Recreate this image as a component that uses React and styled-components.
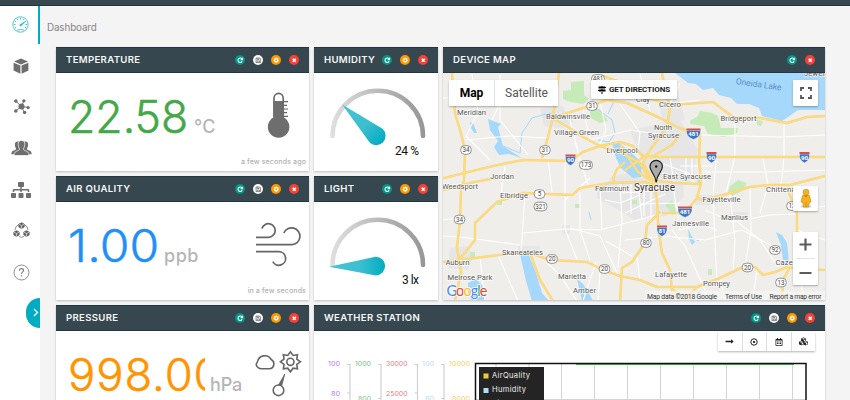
import React from "react";
import styled, { createGlobalStyle } from "styled-components";
import { FaSitemap, FaCubes, FaRegCalendarAlt, FaMapSigns, FaLongArrowAltRight } from "react-icons/fa";

const GlobalStyle = createGlobalStyle`
  * { box-sizing: border-box; }
  html, body { margin: 0; overflow: hidden; }
  body { background: #f4f4f4; font-family: Inter, "Open Sans", sans-serif; }
  svg { display: block; }
`;

const Page = styled.div`
  width: 850px;
  height: 400px;
  display: flex;
  flex-direction: column;
  overflow: hidden;
`;
const TopBar = styled.div`
  flex: 0 0 6px;
  background: #37474f;
  border-bottom: 1px solid #22343d;
`;
const Main = styled.div`
  flex: 1;
  display: flex;
  min-height: 0;
`;
const Sidebar = styled.nav`
  width: 40px;
  flex: none;
  background: #fff;
  display: flex;
  flex-direction: column;
`;
const NavItem = styled.a`
  height: ${(p) => (p.$active ? 38 : 41.3)}px;
  flex: none;
  display: flex;
  align-items: center;
  justify-content: center;
  padding: ${(p) => (p.$active ? "0 0 2px 2px" : "2px 0 0 2px")};
  color: ${(p) => (p.$active ? "#26b8ca" : "#6e6e6e")};
  border-right: ${(p) => (p.$active ? "2px solid #00acc1" : "0")};
`;
const Toggle = styled.button`
  width: 14px;
  height: 30px;
  flex: none;
  align-self: flex-end;
  margin-top: 6px;
  padding: 0 0 0 5px;
  border: 0;
  border-radius: 15px 0 0 15px;
  background: #00acc1;
  display: flex;
  align-items: center;
  justify-content: center;
`;
const Content = styled.main`
  flex: 1;
  padding: 0 25px 0 16px;
`;
const Crumb = styled.div`
  height: 41px;
  margin-left: -9px;
  padding-top: 15px;
  font-size: 9.8px;
  line-height: 14px;
  letter-spacing: -0.1px;
  color: #858585;
`;
const Grid = styled.div`
  display: grid;
  grid-template-columns: 253px 124px 382px;
  grid-template-rows: 124px 124px 124px;
  gap: 5px;
`;
const CardBox = styled.section`
  grid-area: ${(p) => p.$area};
  background: #fff;
  box-shadow: 0 1px 2px rgba(0, 0, 0, 0.22);
  display: flex;
  flex-direction: column;
  overflow: hidden;
`;
const CardHeader = styled.header`
  height: 26px;
  flex: none;
  display: flex;
  align-items: center;
  justify-content: space-between;
  padding: 0 10px;
  background: #37474f;
  border: solid #233740;
  border-width: 1px 0;
`;
const Title = styled.h2`
  margin: 0;
  font-size: 9.6px;
  font-weight: 600;
  line-height: 14px;
  letter-spacing: 0.32px;
  color: #f5f6f7;
  white-space: nowrap;
`;
const Actions = styled.div`
  display: flex;
  gap: 7.5px;
`;
const tones = { teal: "#009688", white: "#fafafa", orange: "#ff9800", red: "#f44336" };
const Action = styled.button`
  width: 10.5px;
  height: 10.5px;
  padding: 0;
  border: 0;
  border-radius: 50%;
  background: ${(p) => tones[p.$tone]};
`;
const ReadoutBody = styled.div`
  flex: 1;
  display: flex;
  flex-direction: column;
  padding: 13px 3px 3px 14px;
`;
const ReadoutRow = styled.div`
  height: 67px;
  flex: none;
  display: flex;
  justify-content: space-between;
`;
const Reading = styled.div`
  display: flex;
  align-items: baseline;
  line-height: 62px;
  white-space: nowrap;
`;
const ValueBox = styled.div`
  width: ${(p) => p.$w}px;
  overflow: hidden;
  height: 62px;
`;
const Value = styled.div`
  margin-left: ${(p) => p.$shift ?? -2}px;
  font-size: 44.5px;
  font-weight: 300;
  letter-spacing: ${(p) => p.$track}px;
  -webkit-text-stroke: 0.5px ${(p) => p.$color};
  transform: scaleX(${(p) => p.$stretch ?? 1});
  transform-origin: 0 50%;
  color: ${(p) => p.$color};
`;
const Unit = styled.span`
  font-size: 18px;
  font-weight: 500;
  letter-spacing: ${(p) => p.$track ?? 0}px;
  margin-left: 5px;
  color: #b5b5b5;
`;
const Stamp = styled.div`
  align-self: flex-end;
  font-size: 7px;
  font-weight: 500;
  line-height: 10px;
  letter-spacing: 0.13px;
  margin-top: 4px;
  color: #b0b0b0;
`;
const StationBody = styled.div`
  flex: 1;
  display: flex;
  flex-direction: column;
`;
const ToolGroup = styled.div`
  height: 19px;
  flex: none;
  align-self: flex-end;
  margin: 1px 10px 0 0;
  display: flex;
  gap: 1px;
  background: #ddd;
  box-shadow: 0 1px 2px rgba(0, 0, 0, 0.3);
`;
const Tool = styled.button`
  width: 23.5px;
  padding: 0;
  border: 0;
  background: #fff;
  display: flex;
  align-items: center;
  justify-content: center;
  color: #222;
`;
const MapBody = styled.div`
  flex: 1;
  display: grid;
  position: relative;
`;
const Overlay = styled.div`
  position: absolute;
  top: ${(p) => p.$top}px;
  left: ${(p) => p.$left}px;
  width: ${(p) => p.$w}px;
  height: ${(p) => p.$h}px;
  display: flex;
  flex-direction: ${(p) => (p.$column ? "column" : "row")};
  align-items: center;
  justify-content: center;
  background: #fff;
  border-radius: 1px;
  box-shadow: 0 1px 2px rgba(0, 0, 0, 0.3);
`;
const MapType = styled.button`
  height: 26px;
  width: ${(p) => p.$w}px;
  padding: 0;
  border: 0;
  border-left: ${(p) => (p.$on ? "0" : "1px solid #e2e2e2")};
  background: none;
  font: ${(p) => (p.$on ? 700 : 400)} 12px Roboto, sans-serif;
  color: ${(p) => (p.$on ? "#000" : "#565656")};
`;
const Directions = styled.span`
  margin-left: 3px;
  font: 700 8px Roboto, sans-serif;
  letter-spacing: -0.1px;
  white-space: nowrap;
  color: #1c1c1c;
`;

const glyphs = {
  teal: <g fill="none" stroke="#fff" strokeWidth="1"><path d="M6.7 3.8A2.1 2.1 0 1 0 6.8 6" /><path d="M7.2 2.6v1.8H5.4" /></g>,
  white: <g fill="none" stroke="#666" strokeWidth=".7"><path d="M2.900 2.900h3.400l.9.9V7.200H2.900z" /><path d="M4 3v1.300h1.700V3M4 7V5.700h2.200V7" /></g>,
  orange: <g><circle cx="5" cy="5" r="1.5" fill="none" stroke="#fff" strokeWidth="1.2" /><path d="M5 2.4v.8M5 6.8v.8M2.4 5h.8M6.8 5h.8M3.2 3.2l.6.6M6.2 6.2l.6.6M6.8 3.2l-.6.6M3.8 6.2l-.6.6" stroke="#fff" strokeWidth=".8" /></g>,
  red: <path d="M3.600 3.600l2.800 2.800M6.400 3.600l-2.800 2.800" stroke="#fff" strokeWidth="1.500" />,
};
const ALL = ["teal", "white", "orange", "red"];

function Card({ area, title, actions = ALL, children }) {
  return (
    <CardBox $area={area}>
      <CardHeader>
        <Title>{title}</Title>
        <Actions>
          {actions.map((t) => (
            <Action key={t} $tone={t}><svg width="10.500" height="10.500" viewBox="0 0 10 10">{glyphs[t]}</svg></Action>
          ))}
        </Actions>
      </CardHeader>
      {children}
    </CardBox>
  );
}

function Readout({ value, unit, color, width, track, stretch, shift, unitTrack, stamp, icon }) {
  return (
    <ReadoutBody>
      <ReadoutRow>
        <Reading>
          <ValueBox $w={width}><Value $color={color} $track={track} $stretch={stretch} $shift={shift}>{value}</Value></ValueBox>
          <Unit $track={unitTrack}>{unit}</Unit>
        </Reading>
        {icon}
      </ReadoutRow>
      {stamp && <Stamp>{stamp}</Stamp>}
    </ReadoutBody>
  );
}

const Thermometer = () => (
  <svg width="60" height="60" viewBox="246 86 60 60">
    <path d="M274 117V98a4.6 4.6 0 0 1 9.2 0v19" fill="#fff" stroke="#666" strokeWidth="1.6" />
    <path d="M273.3 101h10.6v16.5a10.8 10.8 0 1 1-10.6 0z" fill="#6e6e6e" />
    <path d="M283 101.7h5M283 105.3h4M283 109h5M283 112.7h4M283 116.4h5" stroke="#666" strokeWidth="1.2" />
  </svg>
);
const Wind = () => (
  <svg width="60" height="60" viewBox="246 215 60 60" fill="none" stroke="#666" strokeWidth="1.7">
    <path d="M256 237.3h12.5a6.8 6.8 0 1 0-6.6-8.8M256 244.7h36a8.4 8.4 0 1 0-8.2-11.7M256 251.7h22.500a6.800 6.800 0 1 1-5.700 10" />
  </svg>
);
const sunPoints = Array.from({ length: 16 }, (_, i) => {
  const a = (i * Math.PI) / 8;
  const r = i % 2 ? 6.9 : 10;
  return `${290.4 + r * Math.sin(a)},${361.8 - r * Math.cos(a)}`;
}).join(" ");
const Weather = () => (
  <svg width="60" height="60" viewBox="246 344 60 60" fill="none" stroke="#666" strokeWidth="1.6">
    <path d="M262 368.800h8a5 5 0 0 0 1.200-9.300a7.400 7.400 0 0 0-13.700 2.200a4 4 0 0 0 .2 5.500q1.500 1.600 4.300 1.600z" />
    <polygon points={sunPoints} />
    <circle cx="290.4" cy="361.8" r="3.6" />
    <circle cx="278.5" cy="390.3" r="5.3" />
    <path d="M278.5 385l6.300-11-3 11.500z" fill="#666" strokeWidth=".8" />
  </svg>
);

function Gauge({ id, angle, len, label, labelWidth }) {
  return (
    <svg width="124" height="98" viewBox="314 73 124 98">
      <defs>
        <linearGradient id={`${id}-arc`}><stop offset="0" stopColor="#dedede" /><stop offset="1" stopColor="#979797" /></linearGradient>
        <linearGradient id={`${id}-hand`}><stop offset="0" stopColor="#46c3d2" /><stop offset=".55" stopColor="#3dbfcf" /><stop offset="1" stopColor="#00acc1" /></linearGradient>
      </defs>
      <path d="M332.500 136a45 45 0 0 1 90.500 0" fill="none" stroke={`url(#${id}-arc)`} strokeWidth="4.600" strokeLinecap="round" />
      <path d={`M${377.5 - len} 137L375.7 127.600A9.400 9.400 0 1 1 375.700 146.400z`} fill={`url(#${id}-hand)`} transform={`rotate(${angle} 377.5 137)`} />
      <text x="419" y="154.800" textAnchor="end" textLength={labelWidth} fontFamily="Roboto, sans-serif" fontSize="12" fill="#111">{label}</text>
    </svg>
  );
}

const highways = [
  "M452 73L453 90 455 113 462 137 465 152 464 180 461 190 460 220 457 247 459 260 461 272 455 301",
  "M440 179L493 166 523 160 570 161 583 152 600 146 620 142 633 146 643 156 655 157H825",
  "M440 191L470 183 495 178",
  "M559 73L553 117 548 137 542 158",
  "M552 118L568 127 583 137 600 146 622 153 640 163 650 180",
  "M552 118L583 108 607 100 627 103 647 112 660 118 677 127 690 132 700 134 699 160 701 183 697 198 685 213 662 213",
  "M662 73L665 90 670 107 667 127 650 150 643 163 653 180 657 200 658 222 660 240 662 253 670 270 673 301",
  "M600 75L620 82 630 92 670 105 713 102 733 117 760 118 787 123 807 117 825 116",
  "M620 145L638 172 650 180 675 183 701 184",
  "M697 197L702 200 723 195 750 187 770 185 790 185 825 176",
  "M787 188L797 213 797 232",
  "M443 262L507 254 530 253 550 260 587 262 603 270 620 276 640 280 657 287 697 287 720 278 743 267 755 267 763 275 775 272 787 267 800 269 825 270",
  "M660 212L647 225 645 243 632 262 622 268 620 301",
  "M530 253L540 280 553 301",
  "M459 260L475 240 475 223 497 202 523 193 572 195 580 188 610 183 645 182 657 186",
  "M615 184L613 178 617 169 625 162",
  "M790 267L783 280 782 301",
  "M673 290L690 301M697 287L684 301",
  "M650 158L672 145 680 134M648 154L625 170",
];
const streets = [
  "M443 98L480 99 520 92 557 88", "M472 74L478 112 466 136 490 160", "M500 75V120L528 155", "M466 140L508 136 548 138",
  "M443 236L461 237 520 245", "M525 193L521 253M523 233L565 229 600 230 660 214", "M548 158L552 192",
  "M565 162V229L578 262M565 200L590 178M600 184L602 230M580 192V230L590 260", "M570 228L600 236 618 275", "M620 184L622 220 618 268",
  "M596 262L583 301M546 262L560 275 577 301", "M570 120L580 160 588 185", "M600 101L606 130 599 146", "M620 104L640 133 638 150", "M583 108L590 140 630 130 670 136",
  "M640 74L650 110M680 83L670 104 700 100", "M700 135L740 136 780 137 825 135", "M784 122V157L781 186", "M735 120V157L726 193",
  "M700 172H760L825 170", "M716 158L713 197 717 285", "M730 195L735 240 733 272", "M750 188L751 230 745 267", "M705 210L733 222 770 215 797 214",
  "M672 230L685 246 705 290M662 236L705 240 742 230 780 250", "M735 220L760 240 778 267", "M673 186L680 230 700 224 717 230", "M763 159L768 185 760 213",
  "M640 195L620 203 605 200M640 204L680 203M644 186V216M651 186V222M631 184V214M638 184L642 220M625 213L665 194M622 193L670 190",
  "M680 166H712M686 157V184M692 158V182M670 157L674 184M664 164L690 174", "M625 240L658 237M606 241L632 256M637 257L640 281", "M480 258L485 300M498 255L518 301M443 220L461 218",
  "M757 268L753 301M720 278L725 301M800 270L803 301", "M797 230L825 240M800 210L825 206", "M600 272L598 301M505 166L500 200", "M520 100L500 103 492 120",
];
const parks = [
  "M571 82l13-1v14l5 4-6 5-12-2-8-3v-8l8-1z", "M590 106l12 5 6 10-8 2-10-5z", "M690 121l8-5 2-5 12 2 6 3 3 12 17 0-1 5-13 4-16-3-4-8-14-2z",
  "M730 186l8-6 9 3-5 8-10 5-4-5z", "M672 200l4 10-3 5-8-10z", "M575 204h5v4h-5z", "M632 200h5v4h-5z", "M470 252h5v5h-5z", "M497 201h5v4h-5z", "M708 269h4v6h-4z", "M757 120l6 1-2 5-4-1z", "M638 86l8 2-2 6z", "M696 178l4-2 2 8h-4z",
];
const urban = ["M450 248l18-2 5 10-5 14-20-2z", "M540 108l22-2 12 16-12 6-18-2z", "M612 176l40-6 30 6 2 20-18 20-32 4-22-14-15-8z", "M630 130l50-10 18 30-6 32-34 0-18-26z", "M518 246h22v10h-22z", "M562 225h8v9h-8z", "M655 90l22 0 8 30-20 8z", "M730 212h18v8h-18z", "M695 195h22v10h-22z", "M597 186h20v12h-20z"];
const lakes = [
  "M675 73l13 10 8 1 7 6 10-2 6 7 12 3 6 6 12 0 10 4 3 8 20 5 6-4 10-7 27 0V73z",
  "M612 143l6-1 17 14 7 8-1 13-8 1-12-10-5-10z", "M488 119l13 5-3 3 5 19 19 12-13-4-10 1-5-8 4-6-8-11z",
  "M520 254l8-1 8 20 6 20 7 8h-17l-6-20z", "M468 283l8-4 9 9-1 13h-12l-4-8z", "M577 279l5 4 5 6 6 12h-11z",
  "M776 232l6 3 5 8 2 19-6-2-2-15z", "M688 229l4 8 3 5-3 3-3-6z", "M470 122l3 1 4 10-3 0-3-5z", "M697 291h4v3h-4z",
];
const rivers = ["M503 146L520 153 522 133 532 118 550 113 566 120", "M590 103L612 120 615 133 609 142 598 140", "M599 74L604 90 614 101 608 114", "M589 212l2 8M630 170l-4-15M692 238l7 3"];
const labels = [
  ["Meridian", 457, 114.5, 29], ["Baldwinsville", 546, 119, 44], ["Village Green", 554, 135, 45], ["Liverpool", 606.5, 152.5, 31],
  ["Jordan", 490, 178.5, 24], ["Weedsport", 442, 189, 36], ["Elbridge", 500, 198.3, 28], ["Fairmount", 595, 190.5, 34],
  ["Clay", 636, 102, 14], ["Cicero", 659, 107, 22], ["North", 654, 130, 18], ["Syracuse", 648, 137.8, 31], ["Bridgeport", 720.5, 121, 36],
  ["Jewell", 804, 76, 22], ["East Syracuse", 663, 179, 48], ["Fayetteville", 702.5, 201.5, 38], ["Manlius", 721, 219.5, 27], ["Jamesville", 672, 226, 37],
  ["Chittenango", 766, 191.5, 43], ["Lafayette", 655, 277, 32], ["Pompey", 703, 285.5, 27], ["Cazenovia", 775.5, 265, 36],
  ["Skaneateles", 502, 254.5, 41], ["Auburn", 445.5, 265, 24], ["Melrose Park", 447.5, 279.5, 45], ["Marietta", 558, 279, 28], ["Amber", 573, 293, 23],
];
const routes = [["34", 466, 150], ["31", 545, 150], ["31", 592, 106], ["481", 598, 79], ["173", 586, 165], ["5", 539.5, 194], ["321", 540.5, 206.5], ["34", 459.5, 219.5], ["20", 552, 259], ["20", 604.5, 269], ["80", 646, 243], ["92", 775, 250], ["20", 747.5, 267.5], ["13", 781, 282.5], ["13", 792, 206]];
const interstates = [["90", 570.5, 159.5, 10], ["481", 693.5, 133.5, 14], ["90", 711.5, 157, 10], ["90", 804.5, 157, 10], ["481", 685, 211.5, 14], ["81", 662, 230.5, 10]];

const MapArt = () => (
  <svg width="382" height="227" viewBox="443 73 382 227">
    <rect x="443" y="73" width="382" height="228" fill="#f0eeea" />
    <g fill="#e7e6e6">{urban.map((d) => <path key={d} d={d} />)}</g>
    <g fill="#c6ebb8">{parks.map((d) => <path key={d} d={d} />)}</g>
    <g fill="#a6d8fc">{lakes.map((d) => <path key={d} d={d} />)}</g>
    <g fill="none" stroke="#a6d8fc" strokeWidth="1">{rivers.map((d) => <path key={d} d={d} />)}</g>
    <g fill="none" stroke="#fff" strokeWidth="1.1" strokeLinejoin="round">{streets.map((d) => <path key={d} d={d} />)}</g>
    <g fill="none" strokeLinejoin="round">
      {highways.map((d) => <path key={d} d={d} stroke="#f5d488" strokeWidth="2.5" />)}
      {highways.map((d) => <path key={d} d={d} stroke="#fcdc7c" strokeWidth="1.7" />)}
    </g>
    {routes.map(([n, x, y]) => (
      <g key={`${n}-${x}`}>
        <rect x={x - (n.length > 2 ? 6.5 : 5.3)} y={y - 4.3} width={n.length > 2 ? 13 : 10.6} height="8.6" rx="4" fill="#fff" stroke="#777" strokeWidth=".8" />
        <text x={x} y={y + 2.2} textAnchor="middle" fontFamily="Roboto, sans-serif" fontSize="6.3" fill="#444">{n}</text>
      </g>
    ))}
    {interstates.map(([n, x, y, w]) => (
      <g key={`${n}-${x}`}>
        <path d={`M${x - w / 2} ${y - 3}H${x + w / 2}Q${x + w / 2 + 1} ${y + 3} ${x} ${y + 6}Q${x - w / 2 - 1} ${y + 3} ${x - w / 2} ${y - 3}z`} fill="#3b75c4" stroke="#fff" strokeWidth=".5" />
        <path d={`M${x - w / 2} ${y - 5}H${x + w / 2}v2h-${w}z`} fill="#d0504c" />
        <text x={x} y={y + 2.5} textAnchor="middle" fontFamily="Roboto, sans-serif" fontWeight="700" fontSize="6.2" fill="#fff">{n}</text>
      </g>
    ))}
    <g fontFamily="Roboto, sans-serif" fontSize="7.7" fill="#555" stroke="#fff" strokeWidth="1.4" strokeOpacity=".75" paintOrder="stroke">
      {labels.map(([t, x, y, w]) => <text key={t + x} x={x} y={y} textLength={w}>{t}</text>)}
      <text x="634" y="190.5" textLength="41" fontSize="10" fill="#333">Syracuse</text>
    </g>
    <text x="735.5" y="84" textLength="46" transform="rotate(8 735 84)" fontFamily="Roboto, sans-serif" fontSize="8.5" fill="#5b8fd0">Oneida Lake</text>
    <path d="M656.2 182.5C655 173 650 172 650 166.5a6.2 6.2 0 0 1 12.4 0C662.4 172 657.2 173 656.2 182.5z" fill="#aaa" stroke="#1c1c1c" strokeWidth="1.2" />
    <circle cx="656.2" cy="166.5" r="1.2" fill="#111" />
    <rect x="645" y="291" width="180" height="10" fill="#f5f5f5" fillOpacity=".75" />
    <g fontFamily="Roboto, sans-serif" fontSize="6.8" fill="#333">
      <text x="647" y="298.7" textLength="70">Map data ©2018 Google</text>
      <text x="725" y="298.7" textLength="37">Terms of Use</text>
      <text x="769.5" y="298.7" textLength="52">Report a map error</text>
    </g>
    <text x="446.5" y="296" textLength="41" fontFamily="Lato, sans-serif" fontSize="14.5" stroke="#fff" strokeWidth="1.5" paintOrder="stroke">
      <tspan fill="#4285f4">G</tspan><tspan fill="#ea4335">o</tspan><tspan fill="#fbbc05">o</tspan><tspan fill="#4285f4">g</tspan><tspan fill="#34a853">l</tspan><tspan fill="#ea4335">e</tspan>
    </text>
  </svg>
);

const axes = [
  { x: 340, line: 350, color: "#b678ec", ticks: [["100", 366], ["80", 395.5]], w: [12, 9] },
  { x: 371, line: 381, color: "#7cc285", ticks: [["1000", 366], ["800", 401]], w: [16, 13] },
  { x: 407.5, line: 417.5, color: "#dc7f83", ticks: [["30000", 366], ["25000", 395.5]], w: [21.5, 21.5] },
  { x: 434, line: 444, color: "#b9def8", ticks: [["100", 366], ["80", 401]], w: [12, 9] },
  { x: 470, line: 0, color: "#f5cf6c", ticks: [["10000", 366], ["8000", 401]], w: [21, 18] },
];
const Chart = () => (
  <svg width="511" height="78" viewBox="314 351 511 78">
    {axes.map((a) => (
      <g key={a.x}>
        {a.ticks.map(([t, y], i) => (
          <text key={t} x={a.x - a.w[i]} y={y} textLength={a.w[i]} lengthAdjust="spacingAndGlyphs" fontFamily="Inter, sans-serif" fontSize="6.500" fill={a.color}>{t}</text>
        ))}
        {a.line > 0 && <path d={`M${a.line - 3} 364.5h3V429M${a.line - 3} ${a.ticks[1][1] - 2.5}h3`} fill="none" stroke="#d0d0d0" strokeWidth="1.2" />}
      </g>
    ))}
    <path d="M496 364v60M529 364v60M561.5 364v60M594.5 364v60M627.5 364v60M660.5 364v60M693.5 364v60M726.5 364v60M759.5 364v60M792.5 364v60M476 399.5H806" stroke="#d4d4d4" />
    <rect x="475.5" y="363.5" width="330.5" height="80" fill="none" stroke="#111" strokeWidth="1.5" />
    <path d="M576 364.5H794" stroke="#379a3c" strokeWidth="1.2" />
    <rect x="479" y="367" width="65" height="60" fill="#242424" />
    <rect x="483.5" y="373.5" width="5" height="5" fill="#f2c936" />
    <rect x="483.5" y="388" width="5" height="5" fill="#aedcfb" />
    <g fontFamily="Inter, sans-serif" fontSize="7.6" fill="#ededed">
      <text x="492" y="378.3" textLength="38">AirQuality</text>
      <text x="492" y="392.3" textLength="34">Humidity</text>
      <text x="492" y="406.3" textLength="22">Light</text>
    </g>
  </svg>
);

const dialTicks = Array.from({ length: 9 }, (_, i) => {
  const a = ((i * 30 - 210) * Math.PI) / 180;
  return `M${8.5 + 5 * Math.cos(a)} ${8.5 + 5 * Math.sin(a)}L${8.5 + 6.600 * Math.cos(a)} ${8.5 + 6.600 * Math.sin(a)}`;
}).join("");
const Speedometer = () => (
  <svg width="17" height="17" viewBox="0 0 17 17" fill="none" stroke="currentColor">
    <circle cx="8.5" cy="8.5" r="7.7" strokeWidth=".8" />
    <path d={dialTicks} strokeWidth=".9" />
    <path d="M5 14.200q3.500-1.500 7 0" strokeWidth=".8" />
    <path d="M7.600 9.200L12.800 5.800 8.900 10z" fill="currentColor" strokeWidth=".8" />
  </svg>
);
const Cube = () => (
  <svg width="16" height="16" viewBox="0 0 16 16" fill="currentColor">
    <path d="M8 .5L15 3.500 8 6.500 1 3.500zM.6 4.700L7.400 7.600V15.700L.6 12.400zM15.400 4.700L8.600 7.600V15.700L15.400 12.400z" />
  </svg>
);
const Network = () => (
  <svg width="17" height="17" viewBox="0 0 18 17" fill="currentColor" stroke="currentColor">
    <path d="M9 8.500L3 3M9 8.500L11.500 2.500M9 8.500L16 9.500M9 8.500L12 15M9 8.500L3 13" strokeWidth="1" />
    <g stroke="none"><circle cx="9" cy="8.500" r="3.200" /><circle cx="3" cy="2.800" r="1.900" /><circle cx="11.500" cy="2.500" r="1.800" /><circle cx="16" cy="9.600" r="1.700" /><circle cx="12.300" cy="14.800" r="1.800" /><circle cx="3" cy="13.200" r="1.900" /></g>
  </svg>
);
const person = "M10 0C7.500 0 6.500 1.600 6.700 4c.1 2 .8 3 1.200 4 .3 1.300-.4 1.800-1.800 2.300C4 11 2.700 11.500 2.500 15h15c-.2-3.500-1.500-4-3.600-4.700-1.400-.5-2.100-1-1.800-2.300.4-1 1.100-2 1.200-4C13.500 1.600 12.500 0 10 0z";
const People = () => (
  <svg width="21" height="16" viewBox="0 0 21 16" fill="currentColor">
    <path d={person} transform="translate(-1.800 1.500) scale(.85)" />
    <path d={person} transform="translate(5.800 1.500) scale(.85)" />
    <path d={person} transform="translate(.5 .5)" stroke="#fff" strokeWidth=".7" />
  </svg>
);
const CubeRing = () => (
  <svg width="17" height="17" viewBox="0 0 17 17" fill="none" stroke="#777">
    <path d="M6 2.500Q2 4 2 8M11 2.500Q15 4 15 8M6 14.500q2.500 1.500 5 0" strokeWidth=".8" />
    {[[8.5, 3.600], [3.500, 11.500], [13.500, 11.500]].map(([x, y]) => (
      <g key={x} transform={`translate(${x} ${y})`}>
        <path d="M0-2.800L2.700-1.500V1.500L0 2.900-2.700 1.500V-1.500z" fill="#666" stroke="#555" strokeWidth=".6" />
        <path d="M-2.500-1.300L0 0 2.500-1.300M0 0v2.800" stroke="#fff" strokeWidth=".6" />
      </g>
    ))}
  </svg>
);
const Help = () => (
  <svg width="17" height="17" viewBox="0 0 17 17" fill="none" stroke="#808080">
    <circle cx="8.500" cy="8.500" r="7.500" strokeWidth=".9" />
    <path d="M6.500 6.700q0-2 2-2t2 1.800c0 1.300-2 1.600-2 3.400M8.500 11.200v1.200" strokeWidth="1.200" />
  </svg>
);
const Pegman = () => (
  <svg width="14" height="22" viewBox="0 0 14 22">
    <ellipse cx="7" cy="18.500" rx="5.500" ry="1.700" fill="#ddd" />
    <path d="M3.500 7.500h7l1.500 6.500-1.600.4L9.600 19H4.500l-.8-4.600L2 14z" fill="#f5b21c" stroke="#c8871a" strokeWidth=".6" />
    <circle cx="7" cy="4.300" r="3" fill="#f5b21c" stroke="#c8871a" strokeWidth=".6" />
    <path d="M4.700 7.500L7 9.300l2.300-1.800z" fill="#d5761c" />
    <path d="M7 14v5" stroke="#c8871a" strokeWidth=".7" />
  </svg>
);

export default function App() {
  return (
    <Page>
      <GlobalStyle />
      <TopBar />
      <Main>
        <Sidebar>
          <NavItem $active><Speedometer /></NavItem>
          <NavItem><Cube /></NavItem>
          <NavItem><Network /></NavItem>
          <NavItem><People /></NavItem>
          <NavItem><FaSitemap size={20} /></NavItem>
          <NavItem><CubeRing /></NavItem>
          <NavItem><Help /></NavItem>
          <Toggle>
            <svg width="6" height="9" viewBox="0 0 6 9"><path d="M1 1l3.500 3.500L1 8" fill="none" stroke="#fff" strokeWidth="1.400" /></svg>
          </Toggle>
        </Sidebar>
        <Content>
          <Crumb>Dashboard</Crumb>
          <Grid>
            <Card area="1 / 1" title="TEMPERATURE">
              <Readout value="22.58" unit="°C" color="#43a847" width={119} track={0} stamp="a few seconds ago" unitTrack={0.3} icon={<Thermometer />} />
            </Card>
            <Card area="1 / 2" title="HUMIDITY" actions={["teal", "orange", "red"]}>
              <Gauge id="humidity" angle={42.5} len={48} label="24 %" labelWidth={24} />
            </Card>
            <Card area="1 / 3 / 3 / 4" title="DEVICE MAP" actions={["teal", "red"]}>
              <MapBody>
                <MapArt />
                <Overlay $top={7} $left={6} $w={109} $h={26}>
                  <MapType $on $w={45}>Map</MapType>
                  <MapType $w={64}>Satellite</MapType>
                </Overlay>
                <Overlay $top={7} $left={148} $w={86} $h={19}>
                  <FaMapSigns size={8} /><Directions>GET DIRECTIONS</Directions>
                </Overlay>
                <Overlay $top={7} $left={350} $w={25} $h={26}>
                  <svg width="12" height="12" fill="none" stroke="#555" strokeWidth="1.800"><path d="M1 4V1h3M8 1h3v3M11 8v3H8M4 11H1V8" /></svg>
                </Overlay>
                <Overlay $top={113} $left={350} $w={25} $h={25}><Pegman /></Overlay>
                <Overlay $top={159} $left={350} $w={25} $h={53} $column>
                  <svg width="19" height="53" fill="none" stroke="#5c5c5c" strokeWidth="2.200"><path d="M3.500 12.500h12M9.500 6.500v12M3.500 41h12" /><path d="M0 26.500h19" stroke="#e4e4e4" strokeWidth="1" /></svg>
                </Overlay>
              </MapBody>
            </Card>
            <Card area="2 / 1" title="AIR QUALITY">
              <Readout value="1.00" unit="ppb" color="#1e90f7" width={89} track={0.2} stretch={1.08} shift={-2.5} unitTrack={0.5} stamp="in a few seconds" icon={<Wind />} />
            </Card>
            <Card area="2 / 2" title="LIGHT" actions={["teal", "orange", "red"]}>
              <Gauge id="light" angle={-1} len={48.5} label="3 lx" labelWidth={17} />
            </Card>
            <Card area="3 / 1" title="PRESSURE">
              <Readout value="998.00" unit="hPa" color="#ff9400" width={135} track={0.9} stretch={1.02} unitTrack={-0.1} icon={<Weather />} />
            </Card>
            <Card area="3 / 2 / 4 / 4" title="WEATHER STATION">
              <StationBody>
                <ToolGroup>
                  <Tool><FaLongArrowAltRight size={9} /></Tool>
                  <Tool><svg width="8" height="8"><circle cx="4" cy="4" r="3.200" fill="none" stroke="#222" /><circle cx="4" cy="4" r="1.100" /></svg></Tool>
                  <Tool><FaRegCalendarAlt size={8} /></Tool>
                  <Tool><FaCubes size={9} /></Tool>
                </ToolGroup>
                <Chart />
              </StationBody>
            </Card>
          </Grid>
        </Content>
      </Main>
    </Page>
  );
}
